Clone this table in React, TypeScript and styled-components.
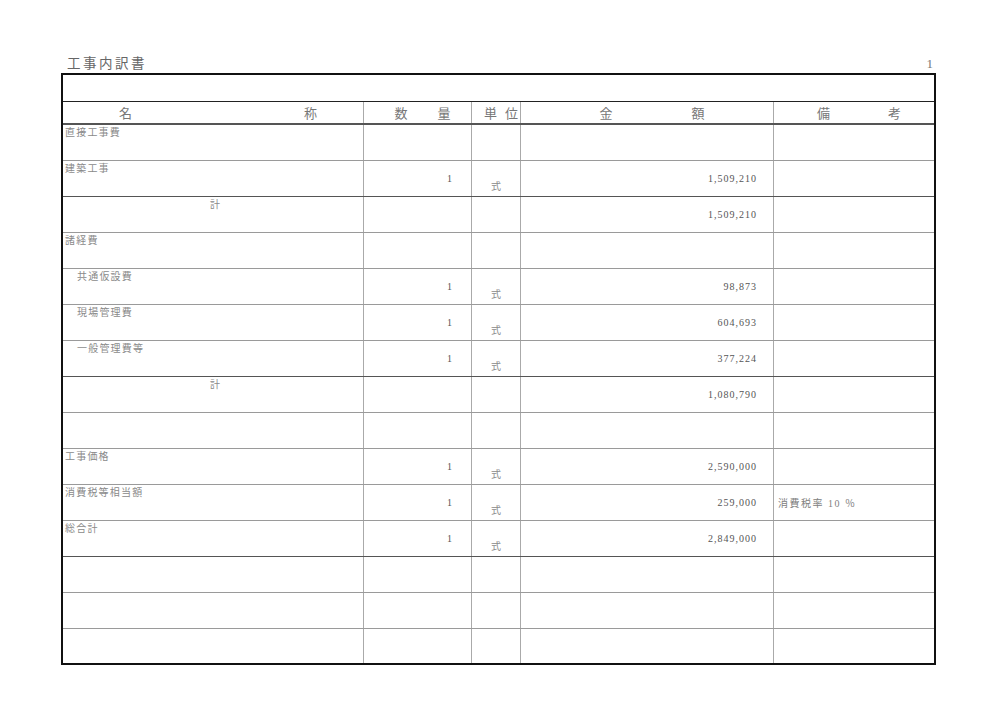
import React from "react";
import styled, { createGlobalStyle } from "styled-components";

const GlobalStyle = createGlobalStyle`
  html, body {
    margin: 0;
    padding: 0;
    background: #fff;
  }
`;

const COLS = "301px 108px 49px 253px 1fr";
const JP = `"Liberation Serif", "Noto Sans CJK JP", serif`;

type Row = {
  label?: string;
  indent?: boolean;
  total?: boolean;
  qty?: string;
  unit?: string;
  amount?: string;
  note?: string;
  strong?: boolean;
};

const rows: Row[] = [
  { label: "直接工事費" },
  { label: "建築工事", qty: "1", unit: "式", amount: "1,509,210", strong: true },
  { label: "計", total: true, amount: "1,509,210" },
  { label: "諸経費" },
  { label: "共通仮設費", indent: true, qty: "1", unit: "式", amount: "98,873" },
  { label: "現場管理費", indent: true, qty: "1", unit: "式", amount: "604,693" },
  { label: "一般管理費等", indent: true, qty: "1", unit: "式", amount: "377,224", strong: true },
  { label: "計", total: true, amount: "1,080,790" },
  {},
  { label: "工事価格", qty: "1", unit: "式", amount: "2,590,000" },
  { label: "消費税等相当額", qty: "1", unit: "式", amount: "259,000", note: "消費税率 10 ％" },
  { label: "総合計", qty: "1", unit: "式", amount: "2,849,000", strong: true },
  {},
  {},
  {},
];

// header captions are two characters spread across the column
const headers = [
  { chars: ["名", "称"], gap: 172 },
  { chars: ["数", "量"], gap: 30 },
  { chars: ["単", "位"], gap: 8 },
  { chars: ["金", "額"], gap: 79 },
  { chars: ["備", "考"], gap: 58 },
];

const Page = styled.div`
  width: 875px;
  padding: 55px 0 0 61px;
`;

const TitleBar = styled.div`
  display: flex;
  justify-content: space-between;
  align-items: flex-end;
  height: 18px;
  padding: 0 3px 0 6px;
`;

const Title = styled.span`
  font-family: ${JP};
  font-size: 13.5px;
  letter-spacing: 2.5px;
  color: #666;
  line-height: 18px;
`;

const PageNo = styled.span`
  font-family: "Liberation Serif", serif;
  font-size: 13px;
  color: #777;
  line-height: 18px;
`;

const Sheet = styled.div`
  border: 2px solid #111;
  box-sizing: border-box;
  width: 875px;
`;

const Band = styled.div`
  height: 26px;
  border-bottom: 1px solid #222;
`;

const HeaderRow = styled.div`
  display: grid;
  grid-template-columns: ${COLS};
  height: 21px;
  border-bottom: 2px solid #555;
`;

const HeaderCell = styled.div<{ $gap: number; $last?: boolean }>`
  display: flex;
  justify-content: center;
  align-items: center;
  gap: ${(p) => p.$gap}px;
  padding-left: 10px;
  border-right: ${(p) => (p.$last ? "none" : "1px solid #aaa")};
  font-family: ${JP};
  font-size: 13px;
  color: #777;
`;

const DataRow = styled.div<{ $strong?: boolean }>`
  display: grid;
  grid-template-columns: ${COLS};
  height: 36px;
  box-sizing: border-box;
  border-bottom: 1px solid ${(p) => (p.$strong ? "#555" : "#9a9a9a")};

  &:last-child {
    border-bottom: none;
    height: 34px;
  }
`;

const Cell = styled.div<{ $last?: boolean }>`
  display: flex;
  border-right: ${(p) => (p.$last ? "none" : "1px solid #aaa")};
  min-width: 0;
`;

const NameCell = styled(Cell)<{ $pad: number }>`
  align-items: flex-start;
  padding: 1px 0 0 ${(p) => p.$pad}px;
  font-family: ${JP};
  font-size: 10px;
  letter-spacing: 1.2px;
  line-height: 14px;
  color: #8a8a8a;
`;

const Num = styled(Cell)`
  align-items: center;
  justify-content: flex-end;
  font-family: "Liberation Serif", serif;
  font-size: 10px;
  letter-spacing: 1px;
  color: #555;
`;

const QtyCell = styled(Num)`
  padding-right: 18px;
`;

const AmountCell = styled(Num)`
  padding-right: 16px;
`;

const UnitCell = styled(Cell)`
  justify-content: center;
  align-items: flex-end;
  padding: 0 0 2px 0;
  font-family: ${JP};
  font-size: 10px;
  line-height: 14px;
  color: #8a8a8a;
`;

const NoteCell = styled(Cell)`
  align-items: center;
  padding-left: 4px;
  font-family: ${JP};
  font-size: 10px;
  letter-spacing: 1.5px;
  color: #808080;
`;

export default function App() {
  return (
    <>
      <GlobalStyle />
      <Page>
        <TitleBar>
          <Title>工事内訳書</Title>
          <PageNo>1</PageNo>
        </TitleBar>
        <Sheet>
          <Band />
          <HeaderRow>
            {headers.map((h, i) => (
              <HeaderCell key={i} $gap={h.gap} $last={i === headers.length - 1}>
                {h.chars.map((c) => (
                  <span key={c}>{c}</span>
                ))}
              </HeaderCell>
            ))}
          </HeaderRow>
          {rows.map((r, i) => (
            <DataRow key={i} $strong={r.strong}>
              <NameCell $pad={r.total ? 147 : r.indent ? 14 : 2}>{r.label}</NameCell>
              <QtyCell>{r.qty}</QtyCell>
              <UnitCell>{r.unit}</UnitCell>
              <AmountCell>{r.amount}</AmountCell>
              <NoteCell $last>{r.note}</NoteCell>
            </DataRow>
          ))}
        </Sheet>
      </Page>
    </>
  );
}
